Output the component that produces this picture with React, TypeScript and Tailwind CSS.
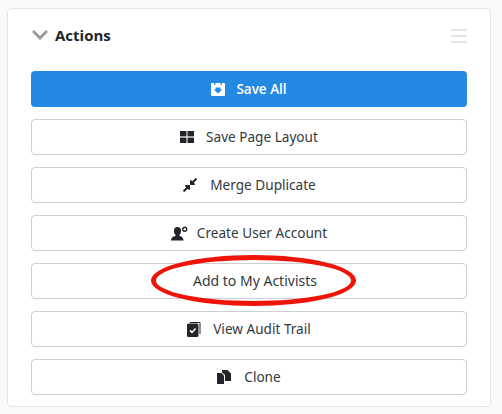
import { FaChevronDown, FaCompressAlt } from "react-icons/fa"

function SaveAllIcon() {
  return (
    <svg viewBox="0 0 14 14" className="h-[14px] w-[14px]" fill="currentColor">
      <path d="M1 1h2.200v2h1.200V1h5.200v2h1.200V1H13a1 1 0 0 1 1 1v11a1 1 0 0 1-1 1H1a1 1 0 0 1-1-1V2a1 1 0 0 1 1-1z" />
      <path d="M4.600 5.400h4.800v2.200h1.800L7 11.600 2.800 7.600h1.800z" fill="#2489e3" />
    </svg>
  )
}

function GridIcon() {
  return (
    <svg viewBox="0 0 14 12" className="h-[12px] w-[14px]" fill="currentColor">
      <rect x="0" y="0" width="6.500" height="5.400" />
      <rect x="7.500" y="0" width="6.500" height="5.400" />
      <rect x="0" y="6.600" width="6.500" height="5.400" />
      <rect x="7.500" y="6.600" width="6.500" height="5.400" />
    </svg>
  )
}

function UserGearIcon() {
  return (
    <svg viewBox="0 0 17 15" className="h-[15px] w-[17px]" fill="currentColor">
      <path d="M6.500 1c2.200 0 3.600 1.600 3.600 4 0 1.800-.7 3.200-1.700 4v1.100c2.600.7 4.100 1.800 4.100 4.400H0c0-2.600 1.600-3.700 4.600-4.400V9c-1-.8-1.700-2.200-1.700-4 0-2.400 1.400-4 3.600-4z" />
      <circle cx="13.700" cy="3.300" r="2" fill="none" stroke="currentColor" strokeWidth="1.400" />
    </svg>
  )
}

function AuditIcon() {
  return (
    <svg viewBox="0 0 14 15" className="h-[15px] w-[14px]" fill="currentColor">
      <path d="M3 0h9.500a1 1 0 0 1 1 1v11h-1V1H3z" />
      <rect x="0" y="1.500" width="11.500" height="13.500" rx="1.500" />
      <path d="M3 8.400l2 2 3.600-3.800" fill="none" stroke="#fff" strokeWidth="1.500" />
    </svg>
  )
}

function CloneIcon() {
  return (
    <svg viewBox="0 0 14 14" className="h-[14px] w-[14px]" fill="currentColor">
      <path d="M0 3h4.500L7 5.500V14H0z" />
      <path d="M5 0h5.500L14 3.500V11H8V5L5 2.500z" />
    </svg>
  )
}

const rows = [
  { label: "Save Page Layout", icon: <GridIcon />, cls: "gap-[12px] text-[13.6px]" },
  { label: "Merge Duplicate", icon: <FaCompressAlt className="h-[16px] w-[16px]" />, cls: "gap-[12px] text-[13.6px]" },
  { label: "Create User Account", icon: <UserGearIcon />, cls: "gap-[9px] text-[13.6px]" },
  { label: "Add to My Activists", icon: null, cls: "pb-[1px] pl-[12px] text-[14px]" },
  { label: "View Audit Trail", icon: <AuditIcon />, cls: "gap-[12px] text-[13.6px]" },
  { label: "Clone", icon: <CloneIcon />, cls: "gap-[13px] text-[13.6px]" },
]

export default function App() {
  return (
    <div className="relative h-[414px] w-[502px] overflow-hidden bg-[#f8f9fb] pl-[7px] pt-[8px] font-['Noto_Sans','Open_Sans',sans-serif]">
      <div className="w-[484px] rounded-[5px] border border-[#e4e5e7] bg-white px-[23px] pb-[11px] pt-[15px]">
        <div className="flex h-[47px] items-start justify-between">
          <div className="flex items-center gap-[6px] pt-[1px]">
            <FaChevronDown className="h-[18px] w-[18px] text-[#999999]" />
            <span className="font-['Open_Sans'] text-[15px] font-bold leading-[20px] text-[#212529]">Actions</span>
          </div>
          <div className="mt-[5px] flex w-[16px] flex-col gap-[4px]">
            <div className="h-[2px] bg-[#e6e6e6]" />
            <div className="h-[2px] bg-[#e6e6e6]" />
            <div className="h-[2px] bg-[#e6e6e6]" />
          </div>
        </div>
        <div className="flex flex-col gap-[12px]">
          <button className="flex h-[36px] items-center justify-center gap-[11px] rounded-[4px] bg-[#2489e3] font-['Open_Sans'] text-[13.5px] font-semibold text-white">
            <SaveAllIcon />
            Save All
          </button>
          {rows.map((r) => (
            <button
              key={r.label}
              className={`flex h-[36px] items-center justify-center rounded-[4px] border border-[#cfcfcf] bg-white text-[#343a40] ${r.cls}`}
            >
              <span className="text-[#212529] empty:hidden">{r.icon}</span>
              {r.label}
            </button>
          ))}
        </div>
      </div>
      <div className="absolute left-[151px] top-[255px] h-[51px] w-[205px] rounded-[50%] border-[5px] border-[#ee1408]" />
    </div>
  )
}
